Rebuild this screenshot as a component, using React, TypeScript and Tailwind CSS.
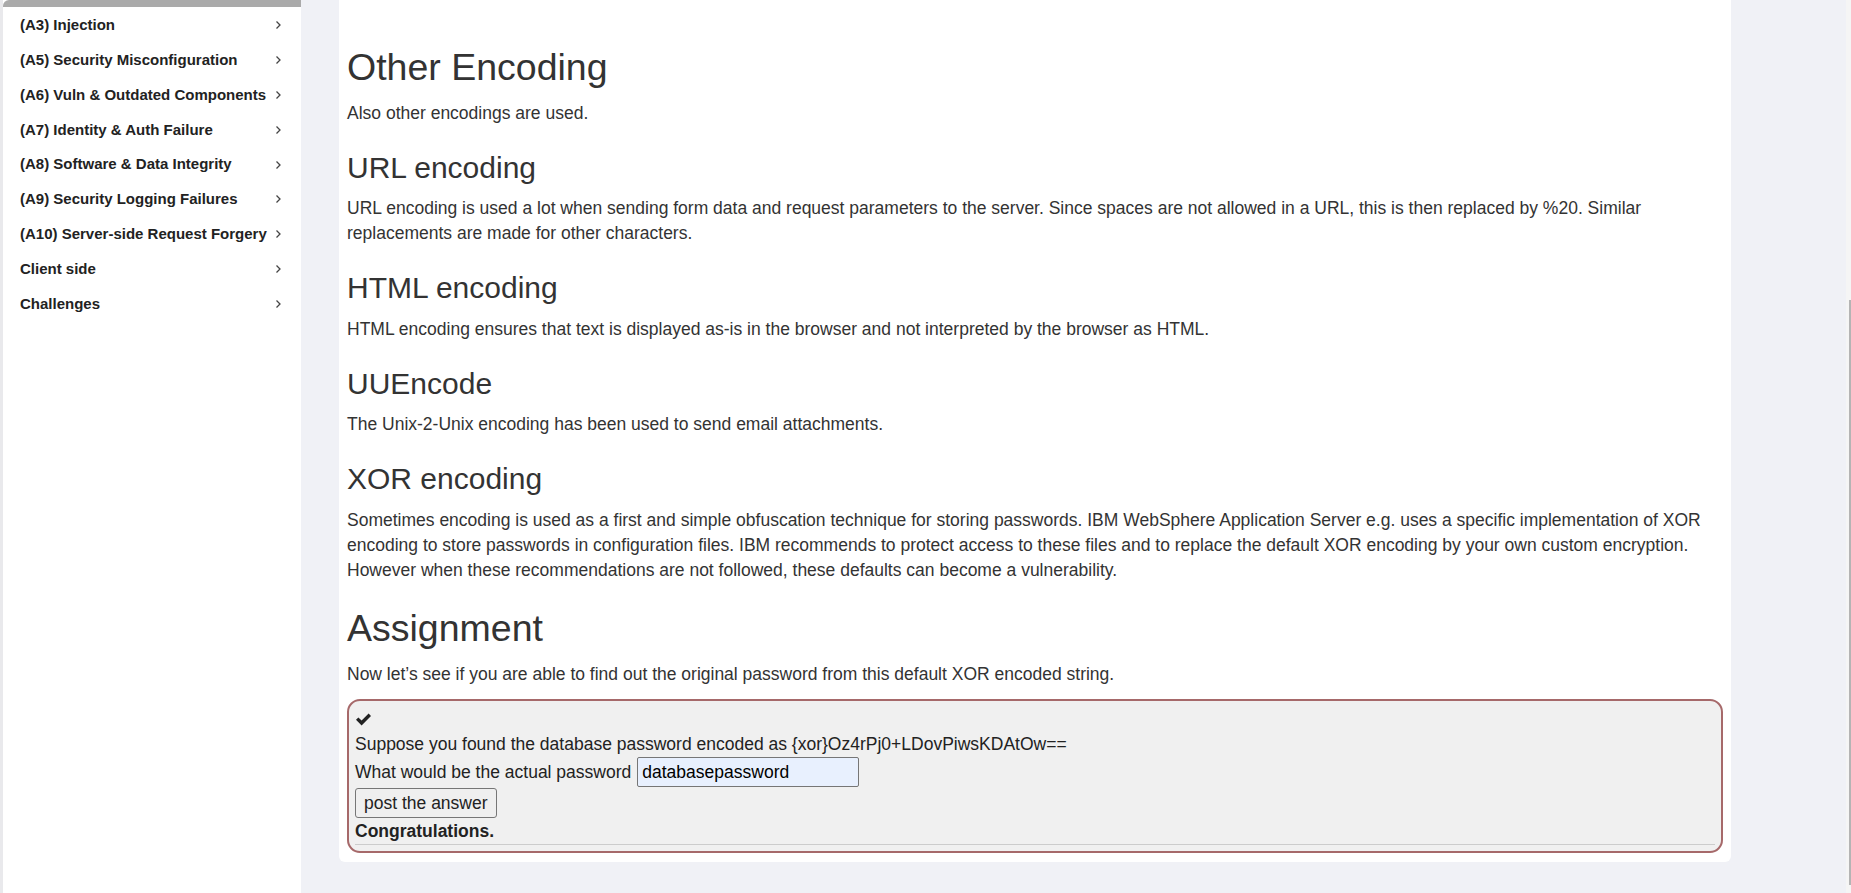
const menu = [
  '(A3) Injection',
  '(A5) Security Misconfiguration',
  '(A6) Vuln & Outdated Components',
  '(A7) Identity & Auth Failure',
  '(A8) Software & Data Integrity',
  '(A9) Security Logging Failures',
  '(A10) Server-side Request Forgery',
  'Client side',
  'Challenges',
];

const sections = [
  {
    title: 'URL encoding',
    text: 'URL encoding is used a lot when sending form data and request parameters to the server. Since spaces are not allowed in a URL, this is then replaced by %20. Similar replacements are made for other characters.',
  },
  {
    title: 'HTML encoding',
    text: 'HTML encoding ensures that text is displayed as-is in the browser and not interpreted by the browser as HTML.',
  },
  {
    title: 'UUEncode',
    text: 'The Unix-2-Unix encoding has been used to send email attachments.',
  },
  {
    title: 'XOR encoding',
    text: 'Sometimes encoding is used as a first and simple obfuscation technique for storing passwords. IBM WebSphere Application Server e.g. uses a specific implementation of XOR encoding to store passwords in configuration files. IBM recommends to protect access to these files and to replace the default XOR encoding by your own custom encryption. However when these recommendations are not followed, these defaults can become a vulnerability.',
  },
];

function Chevron() {
  return (
    <svg width="7" height="10" viewBox="0 0 7 10" className="shrink-0">
      <polyline points="1.5,1.5 5,5 1.5,8.5" fill="none" stroke="#444" strokeWidth="1.3" />
    </svg>
  );
}

function Check() {
  return (
    <svg width="17" height="13" viewBox="0 0 17 13">
      <path d="M1 6.8 L3.4 4.4 L6.6 7.6 L13.6 0.6 L16 3 L6.6 12.4 Z" fill="#222" />
    </svg>
  );
}

export default function App() {
  return (
    <div className="flex h-[893px] overflow-hidden bg-[#f0f1f6] font-['Liberation_Sans',Arial,sans-serif] text-[#333]">
      {/* Sidebar */}
      <aside className="flex w-[301px] shrink-0 bg-white">
        <div className="w-[3px] bg-[#e9e9ec]" />
        <div className="flex-1">
          <div className="h-[7px] rounded-tl-[6px] bg-[#aaaaaa]" />
          <ul className="mt-[1px]">
            {menu.map((m) => (
              <li
                key={m}
                className="flex h-[34.8px] items-center justify-between pl-[17px] pr-[19px] text-[15px] font-bold text-[#222]"
              >
                <span>{m}</span>
                <Chevron />
              </li>
            ))}
          </ul>
        </div>
      </aside>

      {/* Main */}
      <main className="flex flex-1 pl-[38px]">
        <div className="h-[862px] w-[1392px] shrink-0 rounded-b-[6px] bg-white px-[8px] pt-[22px] text-[17.5px] leading-[25px]">
          <h1 className="mt-[25px] mb-[12.5px] text-[37.5px] font-normal leading-[1.1]">Other Encoding</h1>
          <p className="mb-[12.5px]">Also other encodings are used.</p>

          {sections.map((s) => (
            <div key={s.title}>
              <h3 className="mt-[25px] mb-[12.5px] text-[30px] font-normal leading-[1.1]">{s.title}</h3>
              <p className="mb-[12.5px]">{s.text}</p>
            </div>
          ))}

          <h1 className="mt-[25px] mb-[12.5px] text-[37.5px] font-normal leading-[1.1]">Assignment</h1>
          <p className="mb-[12.5px]">
            Now let’s see if you are able to find out the original password from this default XOR encoded string.
          </p>

          {/* Assignment form */}
          <div className="rounded-[13px] border-2 border-[#a6696a] bg-[#f0f0f0] px-[6px] pt-[6px] pb-[6px] text-[#222]">
            <div className="flex h-[25px] items-center">
              <Check />
            </div>
            <div className="h-[25px]">
              Suppose you found the database password encoded as {'{xor}'}Oz4rPj0+LDovPiwsKDAtOw==
            </div>
            <div className="flex h-[31px] items-start">
              <span className="leading-[30px]">What would be the actual password</span>
              <input
                readOnly
                value="databasepassword"
                className="ml-[6px] h-[30px] w-[222px] rounded-[2px] border border-[#767676] bg-[#e8f0fe] px-[4px] text-[17.5px] text-black outline-none"
              />
            </div>
            <button className="h-[30px] rounded-[3px] border border-[#767676] bg-[#efefef] px-[8px] text-[17.5px] text-[#222]">
              post the answer
            </button>
            <div className="mt-[1px] h-[25px] font-bold">Congratulations.</div>
            <div className="h-px bg-[#cccccc]" />
          </div>
        </div>

        <div className="flex-1" />
        {/* scrollbar */}
        <div className="flex w-[5px] flex-col bg-[#f5f5f5]">
          <div className="h-[300px]" />
          <div className="ml-[3px] h-[585px] w-[2px] bg-[#b4b4b4]" />
        </div>
      </main>
    </div>
  );
}
